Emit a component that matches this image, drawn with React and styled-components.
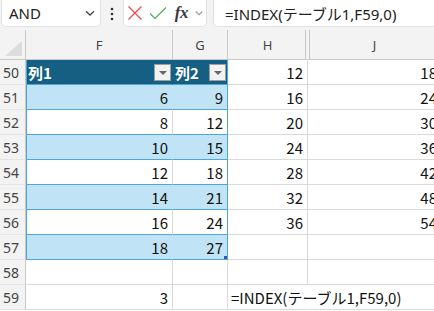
import React from 'react';
import styled, { createGlobalStyle } from 'styled-components';

const GlobalStyle = createGlobalStyle`
  html, body {
    margin: 0;
    padding: 0;
    background: #ffffff;
  }
`;

const colors = {
  chrome: '#f3f3f3',
  grid: '#dadada',
  headLine: '#c8c8c8',
  tableHead: '#156082',
  band: '#c0e4f5',
  tableLine: '#4ea7dc',
};

const rows = [
  { n: 50, f: '列1', g: '列2', h: 12, j: 18, kind: 'head' },
  { n: 51, f: 6, g: 9, h: 16, j: 24, kind: 'band' },
  { n: 52, f: 8, g: 12, h: 20, j: 30, kind: 'plain' },
  { n: 53, f: 10, g: 15, h: 24, j: 36, kind: 'band' },
  { n: 54, f: 12, g: 18, h: 28, j: 42, kind: 'plain' },
  { n: 55, f: 14, g: 21, h: 32, j: 48, kind: 'band' },
  { n: 56, f: 16, g: 24, h: 36, j: 54, kind: 'plain' },
  { n: 57, f: 18, g: 27, h: '', j: '', kind: 'band', last: true },
  { n: 58, f: '', g: '', h: '', j: '' },
  { n: 59, f: 3, g: '', h: '=INDEX(テーブル1,F59,0)', j: '', spill: true },
];

const Page = styled.div`
  width: 434px;
  height: 311px;
  overflow: hidden;
  background: #fff;
`;

const Toolbar = styled.div`
  display: flex;
  align-items: flex-start;
  height: 30px;
  background: ${colors.chrome};
  font-family: 'Noto Sans', 'Open Sans', sans-serif;
`;

const Box = styled.div`
  box-sizing: border-box;
  height: 27px;
  background: #fff;
  border: 1px solid #e2e2e2;
  border-top: none;
  border-radius: 0 0 5px 5px;
  display: flex;
  align-items: center;
`;

const NameBox = styled(Box)`
  width: 100px;
  margin-left: 1px;
  padding: 0 4px 0 7px;
  justify-content: space-between;
  font-size: 15px;
  color: #222;
`;

const Dots = styled.div`
  width: 22px;
  height: 27px;
  display: flex;
  align-items: center;
  justify-content: center;
`;

const ActionBox = styled(Box)`
  width: 84px;
  padding: 0 2px 0 3px;
  gap: 6px;
`;

const Fx = styled.span`
  font-family: 'Liberation Serif', serif;
  font-style: italic;
  font-weight: bold;
  font-size: 17px;
  color: #3a3a3a;
  margin-left: 2px;
  letter-spacing: -0.5px;
`;

const FormulaBox = styled(Box)`
  flex: 1;
  margin-left: 6px;
  margin-right: -6px;
  padding-left: 11px;
  font-family: 'Noto Sans', 'Noto Sans CJK JP', sans-serif;
  font-size: 15px;
  color: #222;
  white-space: nowrap;
`;

const Grid = styled.div`
  display: grid;
  grid-template-columns: 26px 147px 55px 80px 134px;
  grid-auto-rows: 25px;
  grid-template-rows: 30px;
  font-family: 'Noto Sans CJK JP', sans-serif;
  font-size: 15px;
  color: #111;
`;

const Corner = styled.div`
  box-sizing: border-box;
  background: ${colors.chrome};
  border-right: 1px solid ${colors.headLine};
  border-bottom: 1px solid ${colors.headLine};
  display: flex;
  align-items: flex-end;
  justify-content: flex-end;
  padding: 0 3px 3px 0;
`;

const ColHead = styled.div`
  box-sizing: border-box;
  background: ${colors.chrome};
  border-right: 1px solid ${(p) => (p.$split ? colors.chrome : colors.headLine)};
  border-bottom: 1px solid ${colors.headLine};
  display: flex;
  align-items: center;
  justify-content: center;
  padding-top: 0;
  font-family: 'Noto Sans', 'Open Sans', sans-serif;
  font-size: 13px;
  color: #444;
  box-shadow: ${(p) =>
    p.$split === 'left'
      ? `inset -1px 0 0 ${colors.chrome}, inset -2px 0 0 ${colors.headLine}`
      : p.$split === 'right'
      ? `inset 1px 0 0 ${colors.chrome}, inset 2px 0 0 ${colors.headLine}`
      : 'none'};
`;

const RowHead = styled.div`
  box-sizing: border-box;
  background: ${colors.chrome};
  border-right: 1px solid ${colors.headLine};
  border-bottom: 1px solid #e4e4e4;
  display: flex;
  align-items: center;
  padding-left: 3px;
  font-family: 'Noto Sans', 'Open Sans', sans-serif;
  font-size: 14px;
  color: #444;
`;

const fills = {
  head: colors.tableHead,
  band: colors.band,
  plain: '#fff',
};

const Cell = styled.div`
  position: relative;
  box-sizing: border-box;
  background: ${(p) => fills[p.$kind] || '#fff'};
  border-bottom: 1px solid ${(p) => (p.$kind ? colors.tableLine : colors.grid)};
  border-right: 1px solid
    ${(p) =>
      p.$edge
        ? colors.tableLine
        : p.$noRight
        ? 'transparent'
        : p.$kind === 'head' || p.$kind === 'band'
        ? fills[p.$kind]
        : colors.grid};
  box-shadow: ${(p) => (p.$first ? `inset 1px 0 0 ${colors.tableLine}` : 'none')};
  display: flex;
  align-items: center;
  justify-content: ${(p) => (p.$left ? 'flex-start' : 'flex-end')};
  padding: ${(p) => (p.$left ? '0 0 0 3px' : '0 4px 0 0')};
  white-space: nowrap;
  overflow: ${(p) => (p.$spill ? 'visible' : 'hidden')};
  z-index: ${(p) => (p.$spill ? 1 : 0)};
  color: ${(p) => (p.$kind === 'head' ? '#fff' : '#111')};
  font-weight: ${(p) => (p.$kind === 'head' ? 700 : 400)};
`;

const HeadCell = styled(Cell)`
  justify-content: space-between;
  padding: 0 1px 0 2px;
`;

const FilterButton = styled.span`
  box-sizing: border-box;
  width: 17px;
  height: 17px;
  margin-top: 1px;
  background: #f2f2f2;
  border: 1px solid #9e9e9e;
  display: flex;
  align-items: center;
  justify-content: center;
`;

const Arrow = styled.span`
  width: 0;
  height: 0;
  border-left: 4px solid transparent;
  border-right: 4px solid transparent;
  border-top: 4px solid #666;
  margin-top: 1px;
`;

const Handle = styled.span`
  position: absolute;
  right: -1px;
  bottom: -1px;
  width: 4px;
  height: 4px;
  background: #3e55b8;
`;

const Chevron = ({ size = 11, color = '#555' }) => (
  <svg width={size} height={size} viewBox="0 0 12 12">
    <path d="M2 4.2 L6 8 L10 4.2" fill="none" stroke={color} strokeWidth="1.3" />
  </svg>
);

const FilterHead = ({ label, edge }) => (
  <HeadCell $kind="head" $edge={edge} $first={!edge}>
    <span>{label}</span>
    <FilterButton>
      <Arrow />
    </FilterButton>
  </HeadCell>
);

const App = () => {
  return (
    <Page>
      <GlobalStyle />
      <Toolbar>
        <NameBox>
          <span>AND</span>
          <Chevron size={12} color="#444" />
        </NameBox>
        <Dots>
          <svg width="4" height="14" viewBox="0 0 4 14">
            <circle cx="2" cy="2" r="1.3" fill="#333" />
            <circle cx="2" cy="7" r="1.3" fill="#333" />
            <circle cx="2" cy="12" r="1.3" fill="#333" />
          </svg>
        </Dots>
        <ActionBox>
          <svg width="16" height="16" viewBox="0 0 16 16">
            <path d="M1.5 1.5 L14.5 14.5 M14.5 1.5 L1.5 14.5" stroke="#e5484d" strokeWidth="1.2" />
          </svg>
          <svg width="18" height="16" viewBox="0 0 18 16">
            <path d="M1 8.5 L6 13.5 L17 2.5" fill="none" stroke="#4caf50" strokeWidth="1.2" />
          </svg>
          <Fx>fx</Fx>
          <Chevron size={10} color="#999" />
        </ActionBox>
        <FormulaBox>=INDEX(テーブル1,F59,0)</FormulaBox>
      </Toolbar>

      <Grid>
        <Corner>
          <svg width="17" height="15" viewBox="0 0 17 15">
            <path d="M17 0 L17 15 L0 15 Z" fill="#dcdcdc" />
          </svg>
        </Corner>
        <ColHead>F</ColHead>
        <ColHead>G</ColHead>
        <ColHead $split="left">H</ColHead>
        <ColHead $split="right">J</ColHead>

        {rows.map((r) => (
          <React.Fragment key={r.n}>
            <RowHead>{r.n}</RowHead>
            {r.kind === 'head' ? (
              <>
                <FilterHead label={r.f} />
                <FilterHead label={r.g} edge />
              </>
            ) : (
              <>
                <Cell $kind={r.kind} $first={!!r.kind}>
                  {r.f}
                </Cell>
                <Cell $kind={r.kind} $edge={!!r.kind}>
                  {r.g}
                  {r.last && <Handle />}
                </Cell>
              </>
            )}
            <Cell $left={r.spill} $spill={r.spill} $noRight={r.spill}>
              {r.h}
            </Cell>
            <Cell $noRight={r.spill}>{r.j}</Cell>
          </React.Fragment>
        ))}
      </Grid>
    </Page>
  );
};

export default App;
